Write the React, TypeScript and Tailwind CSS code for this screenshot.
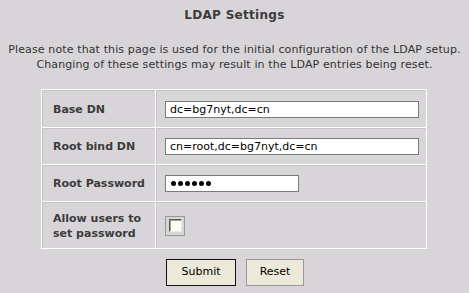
import React from "react";

const font = { fontFamily: '"DejaVu Sans", Verdana, sans-serif' };

function Row({ label, children, tall }: { label: React.ReactNode; children: React.ReactNode; tall?: string }) {
  return (
    <>
      <div className={`flex items-center pl-[10px] border-t border-l border-[#c4c2c4] text-[11px] font-bold text-[#3c3c3c] leading-[15px] ${tall ?? ""}`}>
        {label}
      </div>
      <div className={`flex items-center pl-[8px] border-t border-l border-[#c4c2c4] ${tall ?? ""}`}>{children}</div>
    </>
  );
}

export default function App() {
  return (
    <div className="w-[469px] h-[293px] bg-[#d8d5d8] text-[#333] overflow-hidden" style={font}>
      <div className="pt-[7px] text-center text-[12px] font-bold text-[#3c3c3c] leading-[16px] tracking-[0.3px]">LDAP Settings</div>
      <div className="mt-[19px] text-center text-[11px] leading-[15px] text-[#333] tracking-[0.12px]">
        Please note that this page is used for the initial configuration of the LDAP setup.
        <br />
        Changing of these settings may result in the LDAP entries being reset.
      </div>
      <div className="ml-[41px] mt-[17px] w-[386px] bg-white p-px">
        <div className="grid grid-cols-[113px_1fr] gap-px bg-white">
          <Row label="Base DN" tall="h-[37px] bg-[#d8d5d8]">
            <div className="w-[254px] h-[17px] border border-[#7a7a7a] bg-white text-[11px] leading-[15px] pl-[4px] text-black">dc=bg7nyt,dc=cn</div>
          </Row>
          <Row label="Root bind DN" tall="h-[36px] bg-[#d8d5d8]">
            <div className="w-[254px] h-[17px] border border-[#7a7a7a] bg-white text-[11px] leading-[15px] pl-[4px] text-black">cn=root,dc=bg7nyt,dc=cn</div>
          </Row>
          <Row label="Root Password" tall="h-[36px] bg-[#d8d5d8]">
            <div className="w-[134px] h-[17px] border border-[#7a7a7a] bg-white pl-[5px] flex items-center">
              {Array.from({ length: 6 }).map((_, i) => (
                <span key={i} className="inline-block shrink-0 w-[5px] h-[5px] mr-[2px] rounded-full bg-black" />
              ))}
            </div>
          </Row>
          <Row
            label={
              <span>
                Allow users to
                <br />
                set password
              </span>
            }
            tall="h-[46px] bg-[#d8d5d8]"
          >
            <div className="w-[20px] h-[20px] border border-[#999] flex items-center justify-center">
              <div className="w-[13px] h-[13px] border border-t-[#5a5a5a] border-l-[#5a5a5a] border-r-[#e8e8e8] border-b-[#e8e8e8] bg-[#fcfcf4] shadow-[inset_1px_1px_0_#a0a090]" />
            </div>
          </Row>
        </div>
      </div>
      <div className="flex gap-[10px] ml-[166px] mt-[10px]">
        <button className="w-[70px] h-[27px] border border-[#111] bg-[#ece9d8] text-[11px] text-black">Submit</button>
        <button className="w-[58px] h-[27px] border border-[#999] bg-[#ece9d8] text-[11px] text-black">Reset</button>
      </div>
    </div>
  );
}
